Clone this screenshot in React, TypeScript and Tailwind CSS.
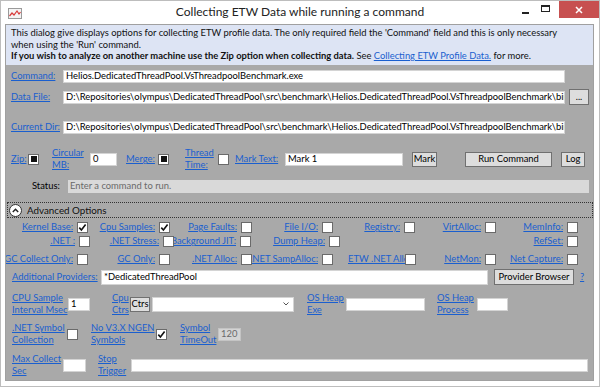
import React from "react";

const link = "text-[#1a5fcf] underline whitespace-nowrap leading-[12px]";

type S = "none" | "check" | "ind";

function CB({ s = "none" }: { s?: S }) {
  return (
    <div className="w-[11px] h-[11px] shrink-0 bg-white border border-[#6a6a6a] flex items-center justify-center">
      {s === "check" && (
        <svg width="9" height="9" viewBox="0 0 9 9">
          <path d="M1.3 4.6 L3.4 7 L7.6 1.4" fill="none" stroke="#111" strokeWidth="1.6" />
        </svg>
      )}
      {s === "ind" && <div className="w-[6px] h-[6px] bg-[#111]" />}
    </div>
  );
}

function Cell({ w, label, s = "none" }: { w: string; label: string; s?: S }) {
  return (
    <div className={"flex items-center justify-end overflow-hidden shrink-0 " + w}>
      <span className={link + " shrink-0"}>{label}</span>
      <div className="ml-[4px] shrink-0">
        <CB s={s} />
      </div>
    </div>
  );
}

function Two({ a, b, w }: { a: string; b: string; w: string }) {
  return (
    <div className={"flex flex-col shrink-0 " + w}>
      <span className={link}>{a}</span>
      <span className={link}>{b}</span>
    </div>
  );
}

export default function App() {
  return (
    <div className="w-[600px] h-[387px] bg-white border border-[#bdbdbd] flex flex-col overflow-hidden font-['Lato',sans-serif] text-[9.4px] text-black">
      {/* Title bar */}
      <div className="h-[23px] flex shrink-0">
        <div className="w-[130px] flex items-start pt-[7px] pl-[7px]">
          <svg width="14" height="11" viewBox="0 0 14 11">
            <rect x="0.5" y="0.5" width="13" height="10" fill="#f4f4f4" stroke="#9a9a9a" />
            <path d="M1.5 8 L4 5 L6 7 L9 3 L11 6 L12.5 4" fill="none" stroke="#d83a3a" strokeWidth="1.2" />
          </svg>
        </div>
        <div className="flex-1 flex items-center justify-center text-[12px] text-[#222] pb-[1px]">
          Collecting ETW Data while running a command
        </div>
        <div className="w-[130px] flex items-start justify-end">
          <div className="w-[20px] h-[17px] flex items-center justify-center">
            <div className="w-[7px] h-[2px] bg-[#222] mt-[6px]" />
          </div>
          <div className="w-[20px] h-[17px] flex items-center justify-center mr-[4px]">
            <div className="w-[9px] h-[7px] border border-[#222] border-t-2 mb-[2px]" />
          </div>
          <div className="w-[40px] h-[17px] bg-[#c75050] flex items-center justify-center">
            <svg width="8" height="8" viewBox="0 0 8 8">
              <path d="M1 1 L7 7 M7 1 L1 7" stroke="#fff" strokeWidth="1.5" />
            </svg>
          </div>
        </div>
      </div>

      {/* Content */}
      <div className="flex-1 ml-[4px] mr-[5px] mb-[5px] border border-[#a0a0a0] flex flex-col min-h-0">
        <div className="h-[40px] bg-[#dde4f4] pl-[5px] pt-[2px] leading-[11.5px] text-[#111] shrink-0 whitespace-nowrap overflow-hidden">
          <div>
            This dialog give displays options for collecting ETW profile data. The only required field the 'Command' field and this is only necessary
          </div>
          <div>when using the 'Run' command.</div>
          <div>
            <span className="font-bold">If you wish to analyze on another machine use the Zip option when collecting data.</span> See{" "}
            <span className="text-[#1a5fcf] underline">Collecting ETW Profile Data.</span> for more.
          </div>
        </div>

        <div className="flex-1 bg-[#a9a9a9] flex flex-col overflow-hidden">
          {/* Command */}
          <div className="mt-[3px] h-[16px] flex items-center pl-[5px]">
            <div className="w-[52px]"><span className={link}>Command:</span></div>
            <div className="w-[502px] h-[13px] bg-white border border-[#d4d4d4] flex items-center pl-[2px] overflow-hidden whitespace-nowrap">
              Helios.DedicatedThreadPool.VsThreadpoolBenchmark.exe
            </div>
          </div>
          {/* Data File */}
          <div className="mt-[5px] h-[16px] flex items-center pl-[5px]">
            <div className="w-[52px]"><span className={link}>Data File:</span></div>
            <div className="w-[502px] h-[13px] bg-white border border-[#d4d4d4] flex items-center pl-[2px] overflow-hidden whitespace-nowrap">
              D:\Repositories\olympus\DedicatedThreadPool\src\benchmark\Helios.DedicatedThreadPool.VsThreadpoolBenchmark\bin\Release\PerfViewData.etl
            </div>
            <div className="ml-[4px] w-[20px] h-[16px] bg-[#dddddd] border border-[#707070] flex items-center justify-center text-[9px]">
              ...
            </div>
          </div>
          {/* Current Dir */}
          <div className="mt-[14px] h-[16px] flex items-center pl-[5px]">
            <div className="w-[52px]"><span className={link}>Current Dir:</span></div>
            <div className="w-[502px] h-[13px] bg-white border border-[#d4d4d4] flex items-center pl-[2px] overflow-hidden whitespace-nowrap">
              D:\Repositories\olympus\DedicatedThreadPool\src\benchmark\Helios.DedicatedThreadPool.VsThreadpoolBenchmark\bin\Release
            </div>
          </div>
          {/* Zip row */}
          <div className="mt-[14px] h-[20px] flex items-center pl-[5px]">
            <div className="w-[17px]"><span className={link}>Zip:</span></div>
            <CB s="ind" />
            <div className="ml-[13px]"><Two a="Circular" b="MB:" w="w-[38px]" /></div>
            <div className="w-[27px] h-[13px] bg-white border border-[#d4d4d4] flex items-center pl-[2px]">0</div>
            <div className="ml-[9px] w-[32px]"><span className={link}>Merge:</span></div>
            <CB s="ind" />
            <div className="ml-[16px]"><Two a="Thread" b="Time:" w="w-[33px]" /></div>
            <CB />
            <div className="ml-[6px] w-[50px]"><span className={link}>Mark Text:</span></div>
            <div className="w-[118px] h-[13px] bg-white border border-[#d4d4d4] flex items-center pl-[2px]">Mark 1</div>
            <div className="ml-[9px] w-[25px] h-[15px] bg-[#dddddd] border border-[#707070] flex items-center justify-center">Mark</div>
            <div className="ml-[28px] w-[87px] h-[15px] bg-[#dddddd] border border-[#707070] flex items-center justify-center">Run Command</div>
            <div className="ml-[9px] w-[24px] h-[15px] bg-[#dddddd] border border-[#707070] flex items-center justify-center">Log</div>
          </div>
          {/* Status */}
          <div className="mt-[11px] h-[13px] flex items-center pl-[26px]">
            <div className="w-[36px]">Status:</div>
            <div className="w-[521px] h-[13px] bg-[#d9d9d9] flex items-center pl-[2px] text-[#6a6a6a]">
              Enter a command to run.
            </div>
          </div>
          {/* Advanced header */}
          <div className="mt-[9px] ml-[1px] w-[586px] h-[16px] border border-dotted border-[#333] flex items-center pl-[1px]">
            <div className="w-[13px] h-[13px] rounded-full bg-white border border-[#333] flex items-center justify-center">
              <svg width="7" height="5" viewBox="0 0 7 5">
                <path d="M0.8 4 L3.5 1.2 L6.2 4" fill="none" stroke="#222" strokeWidth="1.4" />
              </svg>
            </div>
            <span className="ml-[5px] text-[9.8px] text-[#111]">Advanced Options</span>
          </div>
          {/* Checkbox row 1 */}
          <div className="mt-[3px] h-[12px] flex items-center">
            <Cell w="w-[82px]" label="Kernel Base:" s="check" />
            <Cell w="w-[82px]" label="Cpu Samples:" s="check" />
            <Cell w="w-[82px]" label="Page Faults:" />
            <Cell w="w-[81px]" label="File I/O:" />
            <Cell w="w-[82px]" label="Registry:" />
            <Cell w="w-[81px]" label="VirtAlloc:" />
            <Cell w="w-[82px]" label="MemInfo:" />
          </div>
          {/* Checkbox row 2 */}
          <div className="mt-[2px] h-[12px] flex items-center">
            <Cell w="w-[84px]" label=".NET :" />
            <Cell w="w-[84px]" label=".NET Stress:" />
            <Cell w="w-[77px]" label="Background JIT:" />
            <Cell w="w-[89px]" label="Dump Heap:" />
            <Cell w="w-[238px]" label="RefSet:" />
          </div>
          {/* Checkbox row 3 */}
          <div className="mt-[6px] h-[12px] flex items-center">
            <Cell w="w-[82px]" label="GC Collect Only:" />
            <Cell w="w-[82px]" label="GC Only:" />
            <Cell w="w-[82px]" label=".NET Alloc:" />
            <Cell w="w-[81px]" label=".NET SampAlloc:" />
            <div className="w-[83px] flex items-center shrink-0">
              <div className="ml-[15px] w-[57px] overflow-hidden whitespace-nowrap">
                <span className={link}>ETW .NET Alloc:</span>
              </div>
              <CB />
            </div>
            <Cell w="w-[80px]" label="NetMon:" />
            <Cell w="w-[82px]" label="Net Capture:" />
          </div>
          {/* Additional providers */}
          <div className="mt-[4px] h-[16px] flex items-center pl-[6px]">
            <div className="w-[89px]"><span className={link}>Additional Providers:</span></div>
            <div className="w-[387px] h-[15px] bg-white border border-[#d4d4d4] flex items-center pl-[2px]">*DedicatedThreadPool</div>
            <div className="ml-[6px] w-[80px] h-[16px] bg-[#dddddd] border border-[#707070] flex items-center justify-center">Provider Browser</div>
            <span className={link + " ml-[6px]"}>?</span>
          </div>
          {/* CPU sample row */}
          <div className="mt-[8px] h-[22px] flex items-center pl-[6px]">
            <Two a="CPU Sample" b="Interval Msec" w="w-[56px]" />
            <div className="w-[22px] h-[13px] bg-white border border-[#d4d4d4] flex items-center pl-[2px]">1</div>
            <div className="ml-[22px]"><Two a="Cpu" b="Ctrs" w="w-[18px]" /></div>
            <div className="w-[20px] h-[15px] bg-[#dddddd] border border-[#707070] flex items-center justify-center">Ctrs</div>
            <div className="ml-[2px] w-[142px] h-[15px] bg-white border border-[#d4d4d4] flex items-center justify-end pr-[4px]">
              <svg width="6" height="4" viewBox="0 0 6 4">
                <path d="M0.5 0.5 L3 3 L5.5 0.5" fill="none" stroke="#555" strokeWidth="1" />
              </svg>
            </div>
            <div className="ml-[13px]"><Two a="OS Heap" b="Exe" w="w-[39px]" /></div>
            <div className="w-[79px] h-[13px] bg-white border border-[#d4d4d4]" />
            <div className="ml-[12px]"><Two a="OS Heap" b="Process" w="w-[40px]" /></div>
            <div className="w-[31px] h-[13px] bg-white border border-[#d4d4d4]" />
          </div>
          {/* .NET symbol row */}
          <div className="mt-[7px] h-[24px] flex items-center pl-[6px]">
            <Two a=".NET Symbol" b="Collection" w="w-[55px]" />
            <CB />
            <div className="ml-[13px]"><Two a="No V3.X NGEN" b="Symbols" w="w-[65px]" /></div>
            <CB s="check" />
            <div className="ml-[13px]"><Two a="Symbol" b="TimeOut" w="w-[38px]" /></div>
            <div className="w-[23px] h-[13px] bg-[#d4d4d4] border border-[#c4c4c4] flex items-center pl-[2px] text-[#6a6a6a]">120</div>
          </div>
          {/* Max collect row */}
          <div className="mt-[7px] h-[24px] flex items-center pl-[6px]">
            <Two a="Max Collect" b="Sec" w="w-[51px]" />
            <div className="w-[23px] h-[13px] bg-white border border-[#d4d4d4]" />
            <div className="ml-[12px]"><Two a="Stop" b="Trigger" w="w-[33px]" /></div>
            <div className="w-[457px] h-[13px] bg-white border border-[#d4d4d4]" />
          </div>
        </div>
      </div>
    </div>
  );
}
